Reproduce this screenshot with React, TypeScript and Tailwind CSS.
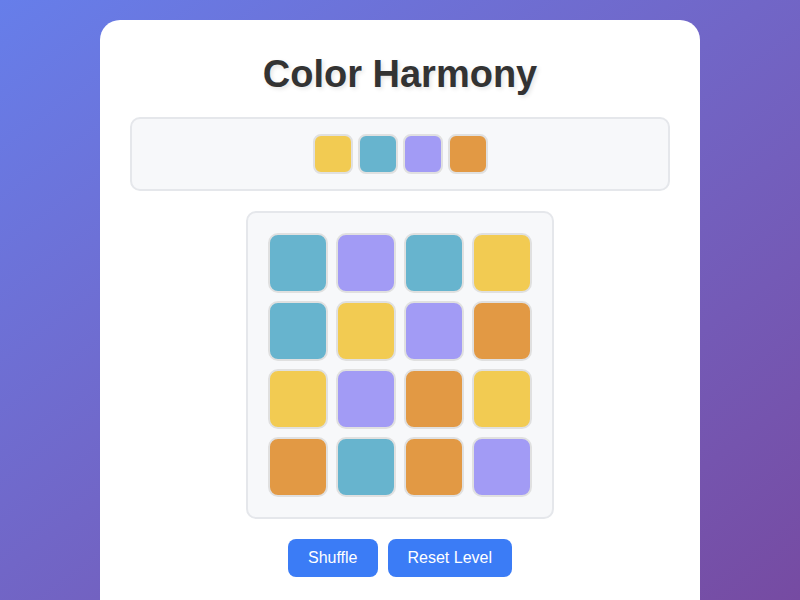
import React from 'react';

type Swatch = 'yellow' | 'teal' | 'purple' | 'orange';

const swatchBg: Record<Swatch, string> = {
  yellow: 'bg-[#f2cb52]',
  teal: 'bg-[#67b4ce]',
  purple: 'bg-[#a29bf5]',
  orange: 'bg-[#e29944]',
};

const target: Swatch[] = ['yellow', 'teal', 'purple', 'orange'];

const board: Swatch[] = [
  'teal', 'purple', 'teal', 'yellow',
  'teal', 'yellow', 'purple', 'orange',
  'yellow', 'purple', 'orange', 'yellow',
  'orange', 'teal', 'orange', 'purple',
];

const App: React.FC = () => {
  return (
    <div className="h-screen w-full overflow-hidden bg-gradient-to-br from-[#667eea] to-[#764ba2] flex justify-center pt-5 font-['Liberation_Sans',Arial,sans-serif]">
      <div className="w-[600px] h-[640px] shrink-0 bg-white rounded-[20px] px-[30px] pt-[30px] flex flex-col items-center">
        {/* Title */}
        <h1 className="font-bold text-[38px] leading-[44px] text-[#333] mt-[2px] mb-[21px] [text-shadow:2px_2px_4px_rgba(0,0,0,0.1)]">
          Color Harmony
        </h1>

        {/* Target pattern */}
        <div className="w-full bg-[#f7f8fa] border-2 border-[#e5e7eb] rounded-[10px] py-[15px] flex justify-center gap-[5px]">
          {target.map((c, i) => (
            <div key={i} className={`w-10 h-10 rounded-lg border-2 border-[#e0e0e0] ${swatchBg[c]}`} />
          ))}
        </div>

        {/* Board */}
        <div className="mt-5 bg-[#f7f8fa] border-2 border-[#e5e7eb] rounded-[10px] p-5 grid grid-cols-4 gap-2">
          {board.map((c, i) => (
            <div key={i} className={`w-[60px] h-[60px] rounded-[10px] border-2 border-[#e0e0e0] ${swatchBg[c]}`} />
          ))}
        </div>

        {/* Controls */}
        <div className="mt-5 flex gap-[10px]">
          <button className="bg-[#3b7cf6] text-white text-base leading-[18px] px-5 py-[10px] rounded-lg">
            Shuffle
          </button>
          <button className="bg-[#3b7cf6] text-white text-base leading-[18px] px-5 py-[10px] rounded-lg">
            Reset Level
          </button>
        </div>
      </div>
    </div>
  );
};

export default App;
